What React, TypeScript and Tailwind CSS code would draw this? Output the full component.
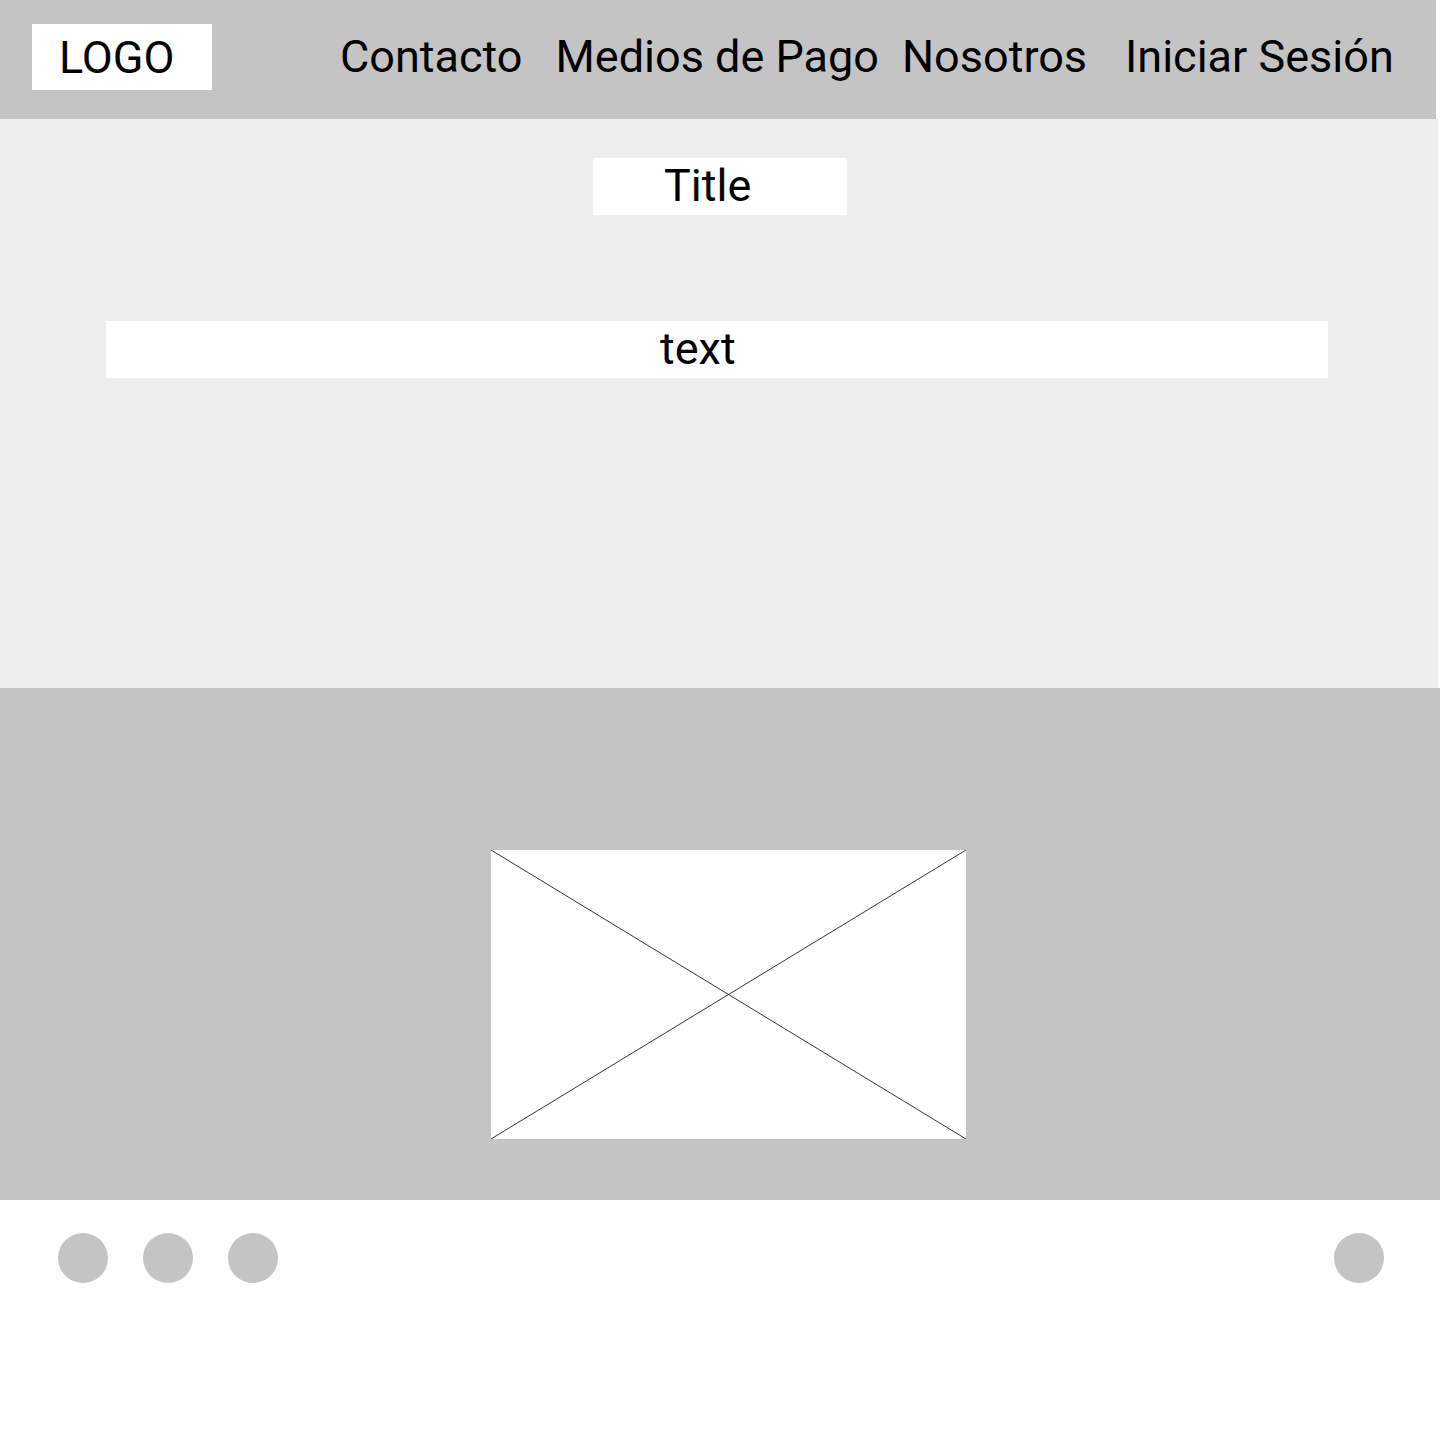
const font = { fontFamily: "Roboto, 'Noto Sans', sans-serif" };

const navItems = [
  { label: "Contacto", cls: "ml-[128px]" },
  { label: "Medios de Pago", cls: "ml-[33px]" },
  { label: "Nosotros", cls: "ml-[23px]" },
  { label: "Iniciar Sesión", cls: "ml-[38px]" },
];

function ImagePlaceholder() {
  return (
    <div className="ml-[491px] h-[289px] w-[475px] bg-white">
      <svg width="475" height="289" viewBox="0 0 475 289" className="block">
        <line x1="0" y1="0" x2="475" y2="289" stroke="#000" strokeWidth="0.8" />
        <line x1="475" y1="0" x2="0" y2="289" stroke="#000" strokeWidth="0.8" />
      </svg>
    </div>
  );
}

export default function App() {
  return (
    <div className="w-[1440px] bg-white text-black" style={font}>
      {/* header */}
      <header className="flex h-[119px] w-[1436px] items-start bg-[#c4c4c4] pt-[24px] text-[45px] leading-none">
        <div className="ml-[32px] flex h-[66px] w-[180px] items-center bg-white pl-[27px]">LOGO</div>
        {navItems.map((item) => (
          <a key={item.label} className={`mt-[10px] ${item.cls}`}>
            {item.label}
          </a>
        ))}
      </header>

      {/* hero */}
      <section className="h-[569px] w-[1438px] bg-[#ededed] pt-[39px] text-[45px] leading-none">
        <div className="ml-[593px] flex h-[57px] w-[254px] items-center bg-white pb-[2px] pl-[71px]">Title</div>
        <div className="ml-[106px] mt-[106px] flex h-[57px] w-[1222px] items-center bg-white pb-[2px] pl-[554px]">text</div>
      </section>

      {/* image band */}
      <section className="h-[512px] bg-[#c4c4c4] pt-[162px]">
        <ImagePlaceholder />
      </section>

      {/* footer */}
      <footer className="flex h-[252px] items-start justify-between px-[56px] pt-[33px]">
        <div className="ml-[2px] flex gap-[35px]">
          <span className="size-[50px] rounded-full bg-[#c4c4c4]" />
          <span className="size-[50px] rounded-full bg-[#c4c4c4]" />
          <span className="size-[50px] rounded-full bg-[#c4c4c4]" />
        </div>
        <span className="size-[50px] rounded-full bg-[#c4c4c4]" />
      </footer>
    </div>
  );
}
